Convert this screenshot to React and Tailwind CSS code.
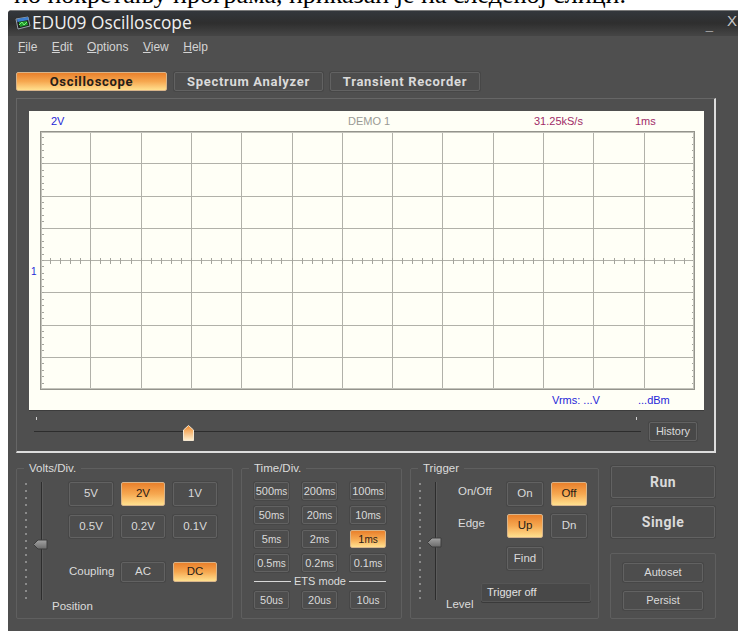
import React from 'react';

const COLS = 13;
const ROWS = 8;
const GRID_W = 654;
const GRID_H = 258;

const range = (n) => Array.from({ length: n }, (_, i) => i);

// Scope graticule: divisions, edge ticks and the ticked centre line
const Graticule = () => {
  const dx = GRID_W / COLS;
  const dy = GRID_H / ROWS;
  return (
    <svg width={GRID_W + 2} height={GRID_H + 2} className="block">
      <g transform="translate(0.5 0.5)" stroke="#b1b1a9" fill="none" shapeRendering="crispEdges">
        {range(COLS - 1).map((i) => (
          <line key={i} x1={Math.round(dx * (i + 1))} y1="0" x2={Math.round(dx * (i + 1))} y2={GRID_H} />
        ))}
        {range(ROWS - 1).map((i) => (
          <line key={i} x1="0" y1={Math.round(dy * (i + 1))} x2={GRID_W} y2={Math.round(dy * (i + 1))} />
        ))}
        {range(ROWS * 5).map((i) => {
          const y = Math.round((dy / 5) * i);
          return (
            <g key={i} stroke="#a4a49c">
              <line x1="0" y1={y} x2="3" y2={y} />
              <line x1={GRID_W - 3} y1={y} x2={GRID_W} y2={y} />
            </g>
          );
        })}
        {range(COLS * 5).map((i) => {
          const x = Math.round((dx / 5) * i);
          return <line key={i} x1={x} y1={GRID_H / 2 - 3} x2={x} y2={GRID_H / 2 + 3} stroke="#a4a49c" />;
        })}
        <rect x="0" y="0" width={GRID_W} height={GRID_H} stroke="#94948c" />
        <rect x="1" y="1" width={GRID_W - 2} height={GRID_H - 2} stroke="#c4c4bc" />
      </g>
    </svg>
  );
};

const Btn = ({ active, className = '', children }) => (
  <button
    type="button"
    className={`flex items-center justify-center whitespace-nowrap border rounded-[2px] ${
      active
        ? 'border-[#d8b48a] bg-gradient-to-b from-[#e9802a] via-[#f6a850] to-[#ffe08e] text-[#262018]'
        : 'border-[#626262] bg-[#4d4d4d] text-[#dadada] shadow-[0_0_0_1px_#474747]'
    } ${className}`}
  >
    {children}
  </button>
);

const Thumb = () => (
  <svg width="15" height="11" viewBox="0 0 15 11" className="block">
    <defs>
      <linearGradient id="thumbFill" x1="0" y1="0" x2="0" y2="1">
        <stop offset="0" stopColor="#a4a4a4" />
        <stop offset="1" stopColor="#6a6a6a" />
      </linearGradient>
    </defs>
    <path d="M0.5 5.5 L5 1 H14 V10 H5 Z" fill="url(#thumbFill)" stroke="#3c3c3c" />
  </svg>
);

// Vertical position slider: dotted scale, track and a handle resting on it
const VSlider = ({ thumbClass }) => (
  <div className="relative h-[118px] flex">
    <div className="ml-[8px] w-[2px] flex flex-col justify-between py-[1px]">
      {range(17).map((i) => (
        <span key={i} className="block w-[2px] h-[2px] bg-[#8a8a8a]" />
      ))}
    </div>
    <div className="ml-[14px] w-[2px] bg-[#2d2d2d] border-r border-[#5c5c5c]" />
    <div className={`absolute left-[16px] ${thumbClass}`}>
      <Thumb />
    </div>
  </div>
);

const GroupBox = ({ label, className = '', children }) => (
  <fieldset className={`border border-[#5f5f5f] rounded-[2px] ${className}`}>
    {label && <legend className="ml-[7px] px-[5px] text-[11.5px] leading-[12px] text-[#dcdcdc]">{label}</legend>}
    {children}
  </fieldset>
);

const TIME_ROWS = [
  [['500', 'ms'], ['200', 'ms'], ['100', 'ms']],
  [['50', 'ms'], ['20', 'ms'], ['10', 'ms']],
  [['5', 'ms'], ['2', 'ms'], ['1', 'ms']],
  [['0.5', 'ms'], ['0.2', 'ms'], ['0.1', 'ms']],
];

const TimeBtn = ({ value, unit, active }) => (
  <Btn active={active} className="h-[18px] text-[11px]">
    {value}
    <span className="text-[10px]">{unit}</span>
  </Btn>
);

const App = () => {
  return (
    <div className="w-[738px] h-[631px] overflow-hidden bg-white font-['Liberation_Sans',sans-serif]">
      <div className="h-[10px] overflow-hidden">
        <p className="ml-[14px] -mt-[20px] whitespace-nowrap text-black text-[26px] leading-[30px] font-['Liberation_Serif',serif]">
          по покретању програма, приказан је на следећој слици.
        </p>
      </div>

      <div className="ml-[8px] h-[621px] flex flex-col bg-[#4f4f4f] rounded-tl-[4px] overflow-hidden">
        {/* title bar */}
        <div className="h-[25px] flex items-center pl-[7px] border-t border-[#7a7a7a] bg-gradient-to-b from-[#33373c] via-[#2e2e2e] to-[#444444]">
          <svg width="16" height="14" viewBox="0 0 16 14" className="block">
            <path d="M1 3 L13 1 L15 10 L3 13 Z" fill="#1c1c1c" stroke="#9aa4ae" />
            <path d="M2 3 L13 1 L13.5 4 L2.5 6 Z" fill="#3d7fd0" />
            <path d="M4 6 L12 5 L13 9 L5 11 Z" fill="#1f9a2c" />
            <path d="M4 9 L7 6 L9 9 L12 6" fill="none" stroke="#7cf07c" />
          </svg>
          <span className="ml-[1px] text-[17.3px] leading-[22px] text-[#f0f0f0] font-['Open_Sans',sans-serif]">EDU09 Oscilloscope</span>
          <span className="ml-auto mt-[3px] text-[13px] text-[#aaaaaa]">_</span>
          <span className="ml-[14px] -mt-[3px] w-[11px] text-[15px] text-[#c4c4c4]">X</span>
        </div>

        {/* menu */}
        <div className="h-[22px] flex items-center gap-[14.5px] pl-[10px] text-[12px] text-[#d4d4d4] border-t border-[#444444]">
          <span><u>F</u>ile</span>
          <span><u>E</u>dit</span>
          <span><u>O</u>ptions</span>
          <span><u>V</u>iew</span>
          <span><u>H</u>elp</span>
        </div>

        {/* mode tabs */}
        <div className="mt-[15px] ml-[8px] flex gap-[7px] text-[13px] font-bold tracking-[0.7px] font-['Roboto',sans-serif]">
          <Btn active className="w-[151px] h-[19px]">Oscilloscope</Btn>
          <Btn className="w-[149px] h-[19px]">Spectrum Analyzer</Btn>
          <Btn className="w-[150px] h-[19px]">Transient Recorder</Btn>
        </div>

        {/* display panel */}
        <div className="mt-[7px] ml-[8px] w-[700px] h-[355px] border border-[#666666] border-r-2 border-b-2 border-r-[#dddddd] border-b-[#dddddd] bg-[#4f4f4f] pl-[12px] pt-[12px]">
          <div className="relative w-[675px] h-[300px] bg-[#fffff6] border-b border-[#3c3c3c]">
            <div className="h-[20px] flex items-center pl-[22px] text-[11px] leading-[20px]">
              <span className="w-[297px] text-[#2626d8]">2V</span>
              <span className="w-[186px] text-[#9a9a94]">DEMO 1</span>
              <span className="w-[101px] text-[#a02c68]">31.25kS/s</span>
              <span className="text-[#a02c68]">1ms</span>
            </div>
            <div className="ml-[11px]">
              <Graticule />
            </div>
            <span className="absolute left-[2px] top-[153px] text-[10px] text-[#2626d8]">1</span>
            <div className="h-[19px] flex items-center pl-[523px] text-[11px] text-[#2626d8]">
              <span className="w-[86px]">Vrms: ...V</span>
              <span>...dBm</span>
            </div>
          </div>

          {/* history slider */}
          <div className="relative h-[40px] flex items-center">
            <span className="absolute left-[7px] top-[6px] w-px h-[3px] bg-[#d0d0d0]" />
            <span className="absolute left-[607px] top-[6px] w-px h-[3px] bg-[#d0d0d0]" />
            <div className="ml-[5px] w-[607px] h-px bg-[#2d2d2d]" />
            <svg width="11" height="16" viewBox="0 0 11 16" className="absolute left-[154px] top-[14px]">
              <defs>
                <linearGradient id="historyFill" x1="0" y1="0" x2="0" y2="1">
                  <stop offset="0" stopColor="#f08a2c" />
                  <stop offset="1" stopColor="#fff0d0" />
                </linearGradient>
              </defs>
              <path d="M0.5 5 L5.5 0.5 L10.5 5 V15.5 H0.5 Z" fill="url(#historyFill)" stroke="#f4e6d0" />
            </svg>
            <Btn className="ml-[8px] w-[48px] h-[19px] text-[11px] !bg-[#484848]">History</Btn>
          </div>
        </div>

        {/* bottom controls */}
        <div className="mt-[9px] ml-[8px] flex items-start text-[11.5px]">
          <GroupBox label="Volts/Div." className="w-[217px] h-[157px] mr-[8px]">
            <div className="flex pt-[8px]">
              <div className="w-[52px]">
                <VSlider thumbClass="top-[57px]" />
              </div>
              <div>
                <div className="grid grid-cols-[44px_44px_44px] gap-x-[8px] gap-y-[9px]">
                  <Btn className="h-[24px]">5V</Btn>
                  <Btn active className="h-[24px]">2V</Btn>
                  <Btn className="h-[24px]">1V</Btn>
                  <Btn className="h-[23px]">0.5V</Btn>
                  <Btn className="h-[23px]">0.2V</Btn>
                  <Btn className="h-[23px]">0.1V</Btn>
                </div>
                <div className="mt-[24px] grid grid-cols-[44px_44px_44px] gap-x-[8px] items-center text-[#dcdcdc]">
                  <span>Coupling</span>
                  <Btn className="h-[20px]">AC</Btn>
                  <Btn active className="h-[20px]">DC</Btn>
                </div>
              </div>
            </div>
            <div className="pl-[35px] -mt-[1px] leading-[14px] text-[#dcdcdc]">Position</div>
          </GroupBox>

          <GroupBox label="Time/Div." className="w-[161px] h-[157px] mr-[8px]">
            <div className="pt-[8px] pl-[12px] w-[144px]">
              <div className="grid grid-cols-[35px_35px_36px] gap-x-[13px] gap-y-[6px]">
                {TIME_ROWS.flat().map(([value, unit]) => (
                  <TimeBtn key={value} value={value} unit={unit} active={value === '1'} />
                ))}
              </div>
              <div className="h-[19px] flex items-center text-[11px] text-[#dcdcdc] whitespace-nowrap">
                <span className="w-[37px] h-px bg-[#d8d8d8]" />
                <span className="flex-1 text-center">ETS mode</span>
                <span className="w-[37px] h-px bg-[#d8d8d8]" />
              </div>
              <div className="grid grid-cols-[35px_35px_36px] gap-x-[13px]">
                <TimeBtn value="50" unit="us" />
                <TimeBtn value="20" unit="us" />
                <TimeBtn value="10" unit="us" />
              </div>
            </div>
          </GroupBox>

          <GroupBox label="Trigger" className="w-[189px] h-[157px] mr-[11px]">
            <div className="flex pt-[8px]">
              <div className="w-[47px]">
                <VSlider thumbClass="top-[55px]" />
              </div>
              <div className="text-[#dcdcdc]">
                <div className="grid grid-cols-[41px_36px_36px] gap-x-[8px] items-center">
                  <span className="-mt-[4px] whitespace-nowrap">On/Off</span>
                  <Btn className="h-[24px]">On</Btn>
                  <Btn active className="h-[24px]">Off</Btn>
                </div>
                <div className="mt-[8px] grid grid-cols-[41px_36px_36px] gap-x-[8px] items-center">
                  <span className="-mt-[4px]">Edge</span>
                  <Btn active className="h-[24px]">Up</Btn>
                  <Btn className="h-[24px]">Dn</Btn>
                </div>
                <div className="mt-[9px] pl-[49px]">
                  <Btn className="w-[36px] h-[23px]">Find</Btn>
                </div>
                <div className="mt-[13px] ml-[23px] w-[110px] h-[19px] pl-[5px] leading-[17px] bg-[#484848] border border-[#555555] rounded-[2px] shadow-[0_1px_0_#3a3a3a] text-[11px] text-[#e2e2e2]">
                  Trigger off
                </div>
              </div>
            </div>
            <div className="pl-[35px] -mt-[5px] leading-[14px] text-[#dcdcdc]">Level</div>
          </GroupBox>

          <div className="w-[106px] flex flex-col items-center">
            <Btn className="mt-[4px] w-[104px] h-[32px] text-[14px] font-bold tracking-[0.5px] font-['Roboto',sans-serif]">Run</Btn>
            <Btn className="mt-[8px] w-[104px] h-[32px] text-[14px] font-bold tracking-[0.5px] font-['Roboto',sans-serif]">Single</Btn>
            <div className="mt-[15px] w-[106px] h-[66px] flex flex-col items-center gap-[9px] pt-[9px] border border-[#5f5f5f] rounded-[2px] text-[11px]">
              <Btn className="w-[80px] h-[19px] shrink-0">Autoset</Btn>
              <Btn className="w-[80px] h-[19px] shrink-0">Persist</Btn>
            </div>
          </div>
        </div>
      </div>
    </div>
  );
};

export default App;
